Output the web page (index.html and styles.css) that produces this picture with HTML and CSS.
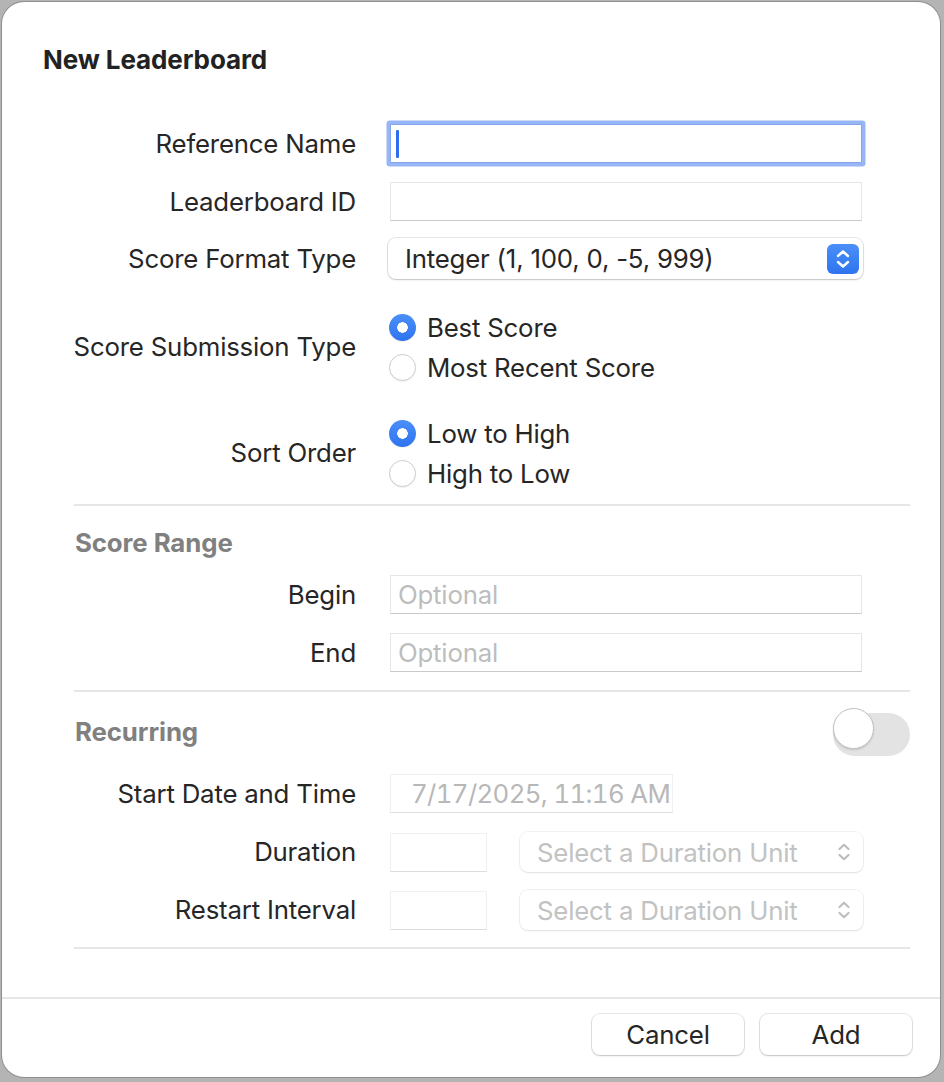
FILE: index.html
```html
<!DOCTYPE html>
<html>
<head>
<meta charset="utf-8">
<link rel="stylesheet" href="styles.css">
</head>
<body>
<div class="window">
  <h1 class="title">New Leaderboard</h1>
  <div class="form">
    <div class="row r1">
      <div class="label">Reference Name</div>
      <div class="field focused"><span class="caret"></span></div>
    </div>
    <div class="row r2">
      <div class="label">Leaderboard ID</div>
      <div class="field"></div>
    </div>
    <div class="row r3">
      <div class="label">Score Format Type</div>
      <div class="select">
        <span class="select-text">Integer (1, 100, 0, -5, 999)</span>
        <span class="stepper">
          <svg width="18" height="22" viewBox="0 0 18 22"><path d="M4 8 L9 3.5 L14 8 M4 14 L9 18.5 L14 14" fill="none" stroke="#fff" stroke-width="2.4" stroke-linecap="round" stroke-linejoin="round"/></svg>
        </span>
      </div>
    </div>
    <div class="row r4">
      <div class="label">Score Submission Type</div>
      <div class="radios">
        <div class="radio-item"><span class="radio on"></span>Best Score</div>
        <div class="radio-item"><span class="radio"></span>Most Recent Score</div>
      </div>
    </div>
    <div class="row r5">
      <div class="label">Sort Order</div>
      <div class="radios">
        <div class="radio-item"><span class="radio on"></span>Low to High</div>
        <div class="radio-item"><span class="radio"></span>High to Low</div>
      </div>
    </div>
    <div class="divider d1"></div>
    <div class="section-head sh1">Score Range</div>
    <div class="row r6">
      <div class="label">Begin</div>
      <div class="field"><span class="placeholder">Optional</span></div>
    </div>
    <div class="row r7">
      <div class="label">End</div>
      <div class="field"><span class="placeholder">Optional</span></div>
    </div>
    <div class="divider d2"></div>
    <div class="section-head sh2">
      <span>Recurring</span>
      <span class="toggle"><span class="knob"></span></span>
    </div>
    <div class="row r8">
      <div class="label">Start Date and Time</div>
      <div class="field date"><span class="date-text">7/17/2025, 11:16 AM</span></div>
    </div>
    <div class="row r9">
      <div class="label">Duration</div>
      <div class="combo">
        <div class="field small"></div>
        <div class="select disabled">
          <span class="select-text">Select a Duration Unit</span>
          <svg class="chev" width="18" height="22" viewBox="0 0 18 22"><path d="M4.5 8 L9 3.8 L13.5 8 M4.5 14 L9 18.2 L13.5 14" fill="none" stroke="#bdbdbd" stroke-width="2.2" stroke-linecap="round" stroke-linejoin="round"/></svg>
        </div>
      </div>
    </div>
    <div class="row r10">
      <div class="label">Restart Interval</div>
      <div class="combo">
        <div class="field small"></div>
        <div class="select disabled">
          <span class="select-text">Select a Duration Unit</span>
          <svg class="chev" width="18" height="22" viewBox="0 0 18 22"><path d="M4.5 8 L9 3.8 L13.5 8 M4.5 14 L9 18.2 L13.5 14" fill="none" stroke="#bdbdbd" stroke-width="2.2" stroke-linecap="round" stroke-linejoin="round"/></svg>
        </div>
      </div>
    </div>
    <div class="divider d3"></div>
  </div>
  <div class="footer">
    <button class="btn">Cancel</button>
    <button class="btn">Add</button>
  </div>
</div>
</body>
</html>
```
FILE: styles.css
```css
html, body {
  margin: 0;
  padding: 0;
}
body {
  background: #b4b4b4;
  width: 944px;
  height: 1082px;
  overflow: hidden;
  font-family: Inter, "Liberation Sans", sans-serif;
  color: #262626;
}
.window {
  margin: 2px 0 0 2px;
  width: 938px;
  height: 1075px;
  background: #fff;
  border-radius: 22px;
  box-shadow: 0 0 0 1px #8f8f8f;
  position: relative;
  display: flex;
  flex-direction: column;
}
.title {
  margin: 43px 0 0 41px;
  font-size: 26px;
  line-height: 30px;
  font-weight: 700;
  color: #222;
  letter-spacing: -0.1px;
}
.form {
  margin: 49px 30px 0 72px;
  display: flex;
  flex-direction: column;
}
.row {
  display: grid;
  grid-template-columns: 282px 472px;
  column-gap: 34px;
  align-items: center;
}
.label {
  justify-self: end;
  white-space: nowrap;
  text-align: right;
  font-size: 25.8px;
  line-height: 30px;
  letter-spacing: -0.2px;
}
.field {
  height: 39px;
  box-sizing: border-box;
  background: #fff;
  border: 1px solid #e6e6e6;
  border-bottom-color: #c9c9c9;
  position: relative;
  display: flex;
  align-items: center;
}
.field.focused {
  border: 1px solid #84a6ee;
  box-shadow: 0 0 0 3.5px #98b6f5;
  border-radius: 1px;
}
.caret {
  display: block;
  width: 2.5px;
  height: 28px;
  margin-left: 5px;
  background: #2f6cf0;
  border-radius: 1px;
}
.placeholder {
  margin-left: 7px;
  font-size: 25.8px;
  color: #bdbdbd;
  letter-spacing: -0.2px;
}
.r2 { margin-top: 19px; }
.r3 { margin-top: 17px; }
.r4 { margin-top: 34px; }
.r5 { margin-top: 38px; }
.r6 { margin-top: 17px; }
.r7 { margin-top: 19px; }
.r8 { margin-top: 18px; }
.r9 { margin-top: 19px; }
.r10 { margin-top: 18px; }

.select {
  height: 41px;
  margin-left: -2px;
  margin-right: -1px;
  box-sizing: border-box;
  border-radius: 8px;
  background: #fff;
  box-shadow: 0 0 0 1px rgba(0,0,0,0.09), 0 1px 2px rgba(0,0,0,0.16);
  display: flex;
  align-items: center;
  padding: 0 4px 0 17px;
}
.select-text {
  flex: 1;
  font-size: 25.8px;
  letter-spacing: -0.2px;
  white-space: nowrap;
}
.stepper {
  width: 32px;
  height: 30px;
  border-radius: 6px;
  background: linear-gradient(#4a8ff8, #2f74ef);
  display: flex;
  align-items: center;
  justify-content: center;
}
.radios {
  display: flex;
  flex-direction: column;
  gap: 12px;
  margin-left: -1px;
}
.radio-item {
  display: flex;
  align-items: center;
  height: 28px;
  font-size: 25.8px;
  letter-spacing: -0.2px;
}
.radio {
  width: 27px;
  height: 27px;
  box-sizing: border-box;
  border-radius: 50%;
  border: 1px solid #cdcdcd;
  background: #fff;
  box-shadow: 0 1px 1px rgba(0,0,0,0.06);
  margin-right: 11px;
  flex: none;
}
.radio.on {
  border: none;
  background: radial-gradient(circle, #fff 0 5px, transparent 5.5px), linear-gradient(#4a8ff8, #2f74ef);
}
.divider {
  height: 2px;
  background: #e6e6e6;
}
.d1 { margin-top: 17px; }
.d2 { margin-top: 18px; }
.d3 { margin-top: 17px; }
.section-head {
  font-size: 25.8px;
  line-height: 30px;
  font-weight: 700;
  color: #808080;
  letter-spacing: -0.1px;
  margin-left: 1px;
}
.sh1 { margin-top: 22px; }
.sh2 {
  margin-top: 21px;
  display: flex;
  justify-content: space-between;
  align-items: center;
  height: 43px;
}
.sh2 span:first-child { margin-top: -6px; }
.toggle {
  width: 77px;
  height: 43px;
  border-radius: 22px;
  background: #e3e3e3;
  position: relative;
  display: block;
}
.knob {
  position: absolute;
  left: 0;
  top: 1px;
  width: 41px;
  height: 41px;
  box-sizing: border-box;
  border-radius: 50%;
  background: #fff;
  border: 1px solid #c2c2c2;
  box-shadow: 0 1px 2px rgba(0,0,0,0.15);
}
.field.date {
  width: 283px;
  border-color: #f0f0f0;
  border-bottom-color: #dedede;
}
.date-text {
  margin-left: 20px;
  font-size: 25.8px;
  color: #b8b8b8;
  letter-spacing: -0.65px;
  font-variant-numeric: tabular-nums;
  white-space: nowrap;
}
.combo {
  display: flex;
  align-items: center;
  gap: 33px;
  height: 40px;
}
.field.small {
  width: 97px;
  border-color: #f0f0f0;
  border-bottom-color: #dcdcdc;
  flex: none;
}
.select.disabled {
  flex: 1;
  height: 40px;
  margin-left: 0;
  box-shadow: 0 0 0 1px rgba(0,0,0,0.05), 0 1px 2px rgba(0,0,0,0.08);
  padding: 0 10px 0 17px;
}
.select.disabled .select-text {
  color: #c2c2c2;
}
.footer {
  margin-top: auto;
  border-top: 2px solid #e6e6e6;
  height: 80px;
  box-sizing: border-box;
  display: flex;
  justify-content: flex-end;
  align-items: flex-start;
  gap: 16px;
  padding: 15px 28px 0 0;
}
.btn {
  width: 152px;
  height: 41px;
  border: none;
  border-radius: 8px;
  background: #fff;
  box-shadow: 0 0 0 1px rgba(0,0,0,0.09), 0 1px 2px rgba(0,0,0,0.16);
  font-family: Inter, "Liberation Sans", sans-serif;
  font-size: 25.8px;
  color: #262626;
  letter-spacing: -0.2px;
  padding: 0;
}
```
